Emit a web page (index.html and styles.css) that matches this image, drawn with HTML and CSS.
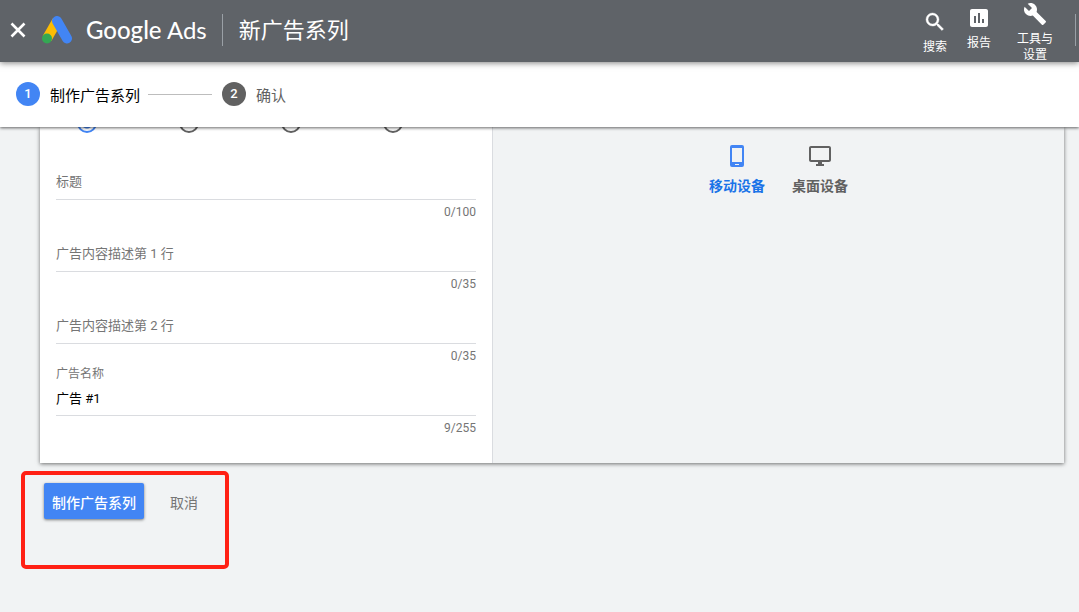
FILE: index.html
```html
<!DOCTYPE html>
<html lang="zh-CN">
<head>
<meta charset="utf-8">
<meta name="viewport" content="width=device-width, initial-scale=1">
<title>新广告系列 - Google Ads</title>
<link rel="stylesheet" href="styles.css">
</head>
<body>
<header class="topbar">
  <button class="close" type="button" aria-label="关闭">
    <svg width="24" height="24" viewBox="0 0 24 24"><path d="M5.500 5.500l13 13M18.500 5.500l-13 13" fill="none" stroke="#fff" stroke-width="2.600"/></svg>
  </button>
  <svg class="logo" width="30" height="28" viewBox="0 0 30 28" aria-hidden="true">
    <path d="M15 5L5 22.500" stroke="#fbbc04" stroke-width="10"/>
    <path d="M15 5l10 17.500" stroke="#4285f4" stroke-width="10" stroke-linecap="round"/>
    <circle cx="5" cy="22.500" r="5" fill="#34a853"/>
  </svg>
  <span class="brand"><span class="brand-name">Google</span> Ads</span>
  <h1 class="title">新广告系列</h1>
  <nav class="tools">
    <button class="tool" type="button">
      <svg width="24" height="24" viewBox="0 0 24 24"><path fill="#fff" stroke="#fff" stroke-width=".4" d="M15.500 14h-.79l-.28-.27A6.470 6.470 0 0 0 16 9.500 6.500 6.500 0 1 0 9.500 16c1.610 0 3.090-.59 4.230-1.570l.27.28v.79l5 4.990L20.490 19l-4.990-5zm-6 0C7.010 14 5 11.990 5 9.500S7.010 5 9.500 5 14 7.010 14 9.500 11.990 14 9.500 14z"/></svg>
      <span>搜索</span>
    </button>
    <button class="tool tool-report" type="button">
      <svg width="24" height="24" viewBox="0 0 24 24"><path fill="#fff" d="M19 3H5c-1.100 0-2 .9-2 2v14c0 1.100.9 2 2 2h14c1.100 0 2-.9 2-2V5c0-1.100-.9-2-2-2zM9 17H7v-7h2v7zm4 0h-2V7h2v10zm4 0h-2v-4h2v4z"/></svg>
      <span>报告</span>
    </button>
    <button class="tool tool-settings" type="button">
      <svg width="24" height="24" viewBox="0 0 24 24"><path fill="#fff" d="M22.700 19l-9.100-9.100c.9-2.300.4-5-1.500-6.900-2-2-5-2.400-7.400-1.300L9 6 6 9 1.600 4.700C.4 7.100.9 10.100 2.900 12.100c1.900 1.900 4.600 2.400 6.900 1.500l9.100 9.100c.4.4 1 .4 1.400 0l2.300-2.300c.5-.4.5-1.100.1-1.400z"/></svg>
      <span>工具与<br>设置</span>
    </button>
  </nav>
</header>

<ol class="steps">
  <li class="step current"><span class="step-number">1</span>制作广告系列</li>
  <li class="connector" aria-hidden="true"></li>
  <li class="step"><span class="step-number">2</span>确认</li>
</ol>

<main class="content">
  <form class="form">
    <div class="card">
      <section class="editor">
        <div class="choices">
          <input type="radio" name="image" aria-label="图片 1" checked>
          <input type="radio" name="image" aria-label="图片 2">
          <input type="radio" name="image" aria-label="图片 3">
          <input type="radio" name="image" aria-label="图片 4">
        </div>
        <div class="field">
          <input class="field-input" type="text" placeholder="标题" aria-label="标题">
          <span class="counter">0/100</span>
        </div>
        <div class="field">
          <input class="field-input" type="text" placeholder="广告内容描述第 1 行" aria-label="广告内容描述第 1 行">
          <span class="counter">0/35</span>
        </div>
        <div class="field">
          <input class="field-input" type="text" placeholder="广告内容描述第 2 行" aria-label="广告内容描述第 2 行">
          <span class="counter">0/35</span>
        </div>
        <div class="field labelled">
          <label class="field-label" for="ad-name">广告名称</label>
          <input class="field-input" id="ad-name" type="text" value="广告 #1">
          <span class="counter">9/255</span>
        </div>
      </section>
      <section class="preview">
        <button class="device active" type="button">
          <svg width="24" height="24" viewBox="0 0 24 24"><path fill="currentColor" fill-rule="evenodd" d="M7 1h10a2 2 0 0 1 2 2v18a2 2 0 0 1-2 2H7a2 2 0 0 1-2-2V3a2 2 0 0 1 2-2zM7 4v14h10V4zM10 20v1h4v-1z"/></svg>
          移动设备
        </button>
        <button class="device" type="button">
          <svg width="24" height="24" viewBox="0 0 24 24"><path fill="currentColor" d="M21 2H3c-1.100 0-2 .9-2 2v12c0 1.100.9 2 2 2h7v2H8v2h8v-2h-2v-2h7c1.100 0 2-.9 2-2V4c0-1.100-.9-2-2-2zm0 14H3V4h18v12z"/></svg>
          桌面设备
        </button>
      </section>
    </div>
    <div class="actions">
      <button class="submit" type="button">制作广告系列</button>
      <button class="cancel" type="button">取消</button>
      <span class="highlight"></span>
    </div>
  </form>
</main>
</body>
</html>
```

FILE: styles.css
```css
* {
  box-sizing: border-box;
}

body {
  margin: 0;
  min-height: 100vh;
  display: flex;
  flex-direction: column;
  background: #f1f3f4;
  color: #000;
  font-family: Roboto, "Noto Sans CJK SC", sans-serif;
  font-size: 14px;
}

button {
  padding: 0;
  border: 0;
  background: none;
  color: inherit;
  font: inherit;
  cursor: pointer;
}

svg {
  display: block;
  flex: none;
}

.topbar {
  position: relative;
  z-index: 3;
  display: flex;
  align-items: center;
  height: 62px;
  padding: 0 3px 2px 6px;
  background: #5f6368;
  color: #fff;
  box-shadow: 0 1px 6px rgba(0, 0, 0, 0.5);
}

.logo {
  margin-left: 12px;
  fill: none;
}

.brand {
  margin-left: 14px;
  font-family: Lato, sans-serif;
  font-size: 24px;
  line-height: 32px;
  white-space: nowrap;
}

.brand-name {
  font-weight: 500;
}

.title {
  margin: 0 0 0 15px;
  padding: 2px 0 0 16px;
  border-left: 1px solid #9aa0a6;
  font-size: 22px;
  font-weight: 400;
  line-height: 30px;
  white-space: nowrap;
}

.tools {
  display: flex;
  align-items: flex-start;
  align-self: stretch;
  margin-left: auto;
}

.tools::after {
  content: "";
  align-self: center;
  height: 32px;
  margin-left: 22px;
  border-left: 1px solid #9aa0a6;
}

.tool {
  display: flex;
  flex-direction: column;
  align-items: center;
  gap: 5px;
  padding-top: 10px;
  font-size: 12px;
  line-height: 16px;
}

.tool-report {
  margin-left: 20px;
  padding-top: 6px;
}

.tool-settings {
  margin-left: 26px;
  padding-top: 2px;
}

.steps {
  position: relative;
  z-index: 2;
  display: flex;
  align-items: center;
  height: 65px;
  margin: 0;
  padding: 0 16px 1px;
  background: #fff;
  box-shadow: 0 1px 3px rgba(0, 0, 0, 0.6);
  list-style: none;
}

.step {
  display: flex;
  align-items: center;
  gap: 10px;
  color: #616161;
  font-size: 15px;
}

.step.current {
  color: #000;
}

.step-number {
  width: 24px;
  height: 24px;
  border-radius: 50%;
  background: #616161;
  color: #fff;
  font-size: 13px;
  font-weight: 500;
  line-height: 24px;
  text-align: center;
}

.current .step-number {
  background: #4285f4;
}

.connector {
  width: 64px;
  height: 1px;
  margin: 0 10px 0 8px;
  background: #bdbdbd;
}

.content {
  flex: 1;
  padding: 0 15px 44px 40px;
}

.card {
  display: grid;
  grid-template-columns: 453px 1fr;
  box-shadow: 0 1px 4px rgba(0, 0, 0, 0.55);
}

.editor {
  padding: 0 16px 27px;
  border-right: 1px solid #dadce0;
  background: #fff;
}

.choices {
  display: flex;
  gap: 82px;
  height: 20px;
  margin: -14px 0 15px;
  padding-left: 21px;
}

.choices input {
  flex: none;
  width: 20px;
  height: 20px;
  margin: 0;
  border: 2px solid #616161;
  border-radius: 50%;
  appearance: none;
}

.choices input:checked {
  border-color: #4285f4;
  background: radial-gradient(circle, #4285f4 5px, transparent 6px);
}

.field {
  display: flex;
  flex-direction: column;
  padding-top: 20px;
}

.field.labelled {
  padding-top: 0;
}

.field-label {
  color: #757575;
  font-size: 12px;
  line-height: 20px;
}

.field-input {
  width: 100%;
  height: 32px;
  padding: 0 0 4px;
  border: 0;
  border-bottom: 1px solid #dadce0;
  outline: 0;
  background: none;
  color: #000;
  font: inherit;
  font-size: 13px;
}

.field-input::placeholder {
  color: #757575;
  opacity: 1;
}

.counter {
  align-self: flex-end;
  padding-top: 4px;
  color: #757575;
  font-size: 12px;
  line-height: 16px;
}

.preview {
  display: flex;
  justify-content: center;
  align-items: flex-start;
  gap: 27px;
  padding-top: 17px;
  background: #f1f3f4;
}

.device {
  display: flex;
  flex-direction: column;
  align-items: center;
  gap: 8px;
  color: #616161;
  font-weight: 700;
  line-height: 20px;
}

.device.active {
  color: #1a73e8;
}

.device.active svg {
  color: #4285f4;
}

.actions {
  position: relative;
  display: flex;
  gap: 26px;
  padding: 20px 4px 0;
}

.submit {
  height: 36px;
  padding: 2px 8px 0;
  border-radius: 2px;
  background: #4285f4;
  color: #fff;
  font-weight: 500;
  box-shadow: 0 1px 3px rgba(0, 0, 0, 0.5);
}

.cancel {
  padding-top: 2px;
  color: #757575;
}

.highlight {
  position: absolute;
  top: 8px;
  left: -19px;
  width: 208px;
  height: 98px;
  border: 4px solid #ff2014;
  border-radius: 5px;
  pointer-events: none;
}
```
